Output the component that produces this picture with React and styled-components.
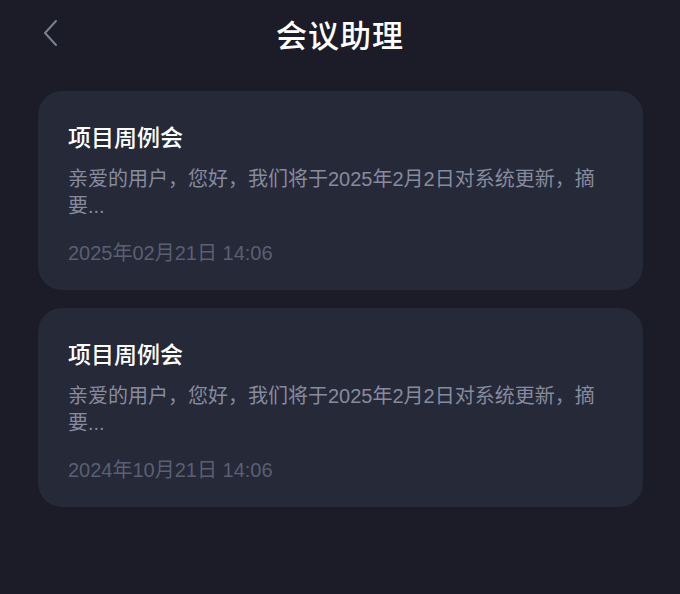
import React from "react";
import styled, { createGlobalStyle } from "styled-components";

const Global = createGlobalStyle`
  html, body { margin: 0; padding: 0; background: #1b1c27; }
  body { font-family: "Liberation Sans", "Noto Sans CJK SC", sans-serif; }
`;

const Page = styled.div`
  width: 680px;
  min-height: 594px;
  background: #1b1c27;
  display: flex;
  flex-direction: column;
`;

const Header = styled.div`
  height: 66px;
  display: flex;
  align-items: center;
  justify-content: center;
  position: relative;
`;

const Back = styled.div`
  position: absolute;
  left: 40px;
  top: 19px;
  width: 20px;
  height: 28px;
  display: flex;
  align-items: center;
  justify-content: center;
`;

const Title = styled.h1`
  margin: 0;
  font-family: "Noto Sans CJK SC", sans-serif;
  font-size: 31px;
  font-weight: 500;
  color: #ffffff;
  letter-spacing: 1px;
`;

const List = styled.div`
  display: flex;
  flex-direction: column;
  gap: 18px;
  padding: 25px 37px 0 38px;
`;

const Card = styled.div`
  background: #252938;
  border-radius: 24px;
  padding: 28px 30px 23px 30px;
  display: flex;
  flex-direction: column;
`;

const CardTitle = styled.div`
  font-family: "Noto Sans CJK SC", sans-serif;
  font-size: 23px;
  line-height: 34px;
  font-weight: 500;
  color: #ffffff;
`;

const Summary = styled.div`
  margin-top: 13px;
  font-size: 20px;
  line-height: 27px;
  color: #878b9e;
`;

const DateText = styled.div`
  margin-top: 19px;
  font-size: 20px;
  line-height: 28px;
  color: #5b5f71;
`;

const items = [
  { title: "项目周例会", summary: "亲爱的用户，您好，我们将于2025年2月2日对系统更新，摘要...", date: "2025年02月21日 14:06" },
  { title: "项目周例会", summary: "亲爱的用户，您好，我们将于2025年2月2日对系统更新，摘要...", date: "2024年10月21日 14:06" },
];

export default function App() {
  return (
    <Page>
      <Global />
      <Header>
        <Back>
          <svg width="16" height="28" viewBox="0 0 16 28" fill="none">
            <polyline points="14,2 3,14 14,26" stroke="#7a7f93" strokeWidth="2" strokeLinecap="round" strokeLinejoin="round" />
          </svg>
        </Back>
        <Title>会议助理</Title>
      </Header>
      <List>
        {items.map((it, i) => (
          <Card key={i}>
            <CardTitle>{it.title}</CardTitle>
            <Summary>{it.summary}</Summary>
            <DateText>{it.date}</DateText>
          </Card>
        ))}
      </List>
    </Page>
  );
}
